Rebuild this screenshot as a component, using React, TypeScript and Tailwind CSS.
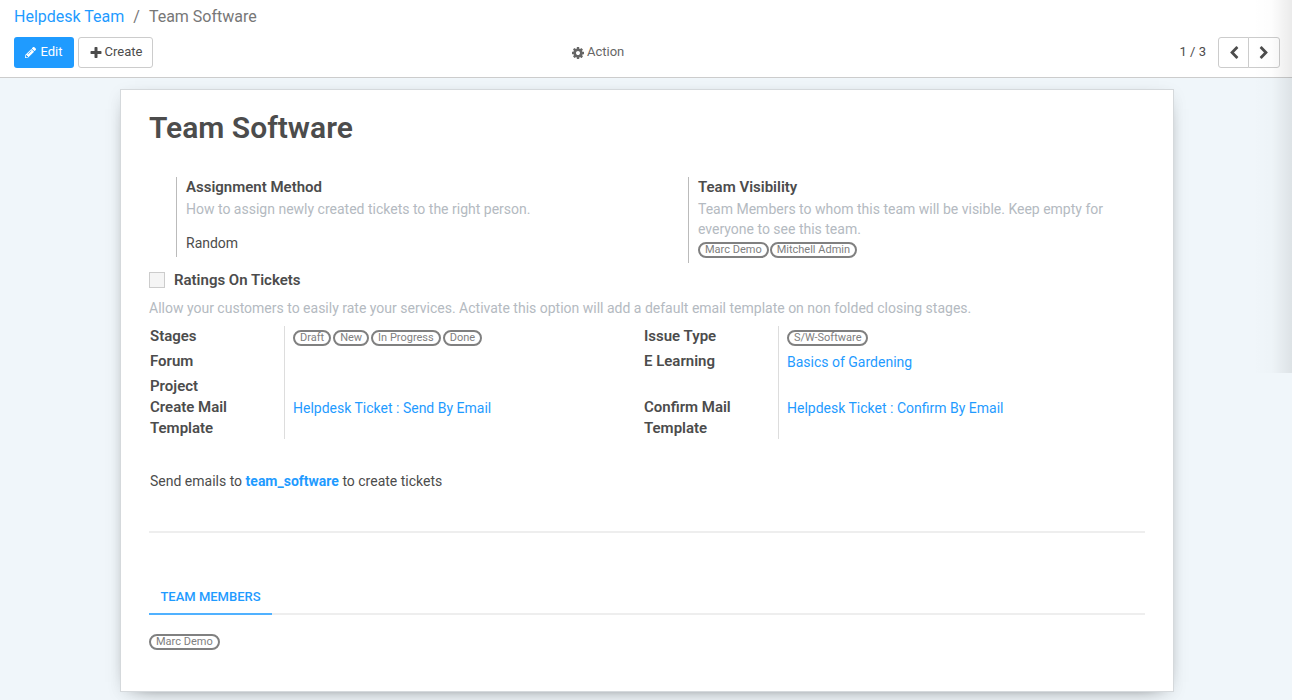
import type { ReactNode } from "react";
import { FaPencilAlt } from "react-icons/fa";

const ICON_PATHS = {
  plus: "M1600 736v192q0 40-28 68t-68 28h-416v416q0 40-28 68t-68 28h-192q-40 0-68-28t-28-68v-416h-416q-40 0-68-28t-28-68v-192q0-40 28-68t68-28h416v-416q0-40 28-68t68-28h192q40 0 68 28t28 68v416h416q40 0 68 28t28 68z",
  cog: "M1152 896q0-106-75-181t-181-75-181 75-75 181 75 181 181 75 181-75 75-181zm512-109v222q0 12-8 23t-20 13l-185 28q-19 54-39 91 35 50 107 138 10 12 10 25t-9 23q-27 37-99 108t-94 71q-12 0-26-9l-138-108q-44 23-91 38-16 136-29 186-7 28-36 28h-222q-14 0-24.5-8.5t-11.5-21.5l-28-184q-49-16-90-37l-141 107q-10 9-25 9-14 0-25-11-126-114-165-168-7-10-7-23 0-12 8-23 15-21 51-66.5t54-70.5q-27-50-41-99l-183-27q-13-2-21-12.5t-8-23.5v-222q0-12 8-23t19-13l186-28q14-46 39-92-40-57-107-138-10-12-10-24 0-10 9-23 26-36 98.5-107.5t94.5-71.5q13 0 26 10l138 107q44-23 91-38 16-136 29-186 7-28 36-28h222q14 0 24.5 8.5t11.5 21.5l28 184q49 16 90 37l142-107q9-9 24-9 13 0 25 10 129 119 165 170 7 8 7 22 0 12-8 23-15 21-51 66.5t-54 70.5q26 50 41 98l183 28q13 2 21 12.5t8 23.5z",
  left: "M1427 301l-531 531 531 531q19 19 19 45t-19 45l-166 166q-19 19-45 19t-45-19l-742-742q-19-19-19-45t19-45l742-742q19-19 45-19t45 19l166 166q19 19 19 45t-19 45z",
  right:
    "M1363 877l-742 742q-19 19-45 19t-45-19l-166-166q-19-19-19-45t19-45l531-531-531-531q-19-19-19-45t19-45l166-166q19-19 45-19t45 19l742 742q19 19 19 45t-19 45z",
};

function Icon({ name }: { name: keyof typeof ICON_PATHS }) {
  return (
    <svg viewBox="0 0 1792 1792" className="h-3.5 w-3.5 shrink-0 fill-current" aria-hidden="true">
      <path d={ICON_PATHS[name]} />
    </svg>
  );
}

function Tag({ children }: { children: ReactNode }) {
  return (
    <span className="inline-flex h-4 items-center whitespace-nowrap rounded-full border-2 border-[#808080] px-[5px] text-[11px] leading-3 text-[#808080]">
      {children}
    </span>
  );
}

function RecordLink({ children }: { children: ReactNode }) {
  return (
    <a href="#record" className="text-[#1f9bff]">
      {children}
    </a>
  );
}

type Field = { label: string; value?: ReactNode; height: string };

function FieldGroup({ fields }: { fields: Field[] }) {
  return (
    <dl className="w-[494px] pt-px">
      {fields.map((field, index) => (
        <div key={index} className={"flex " + field.height}>
          <dt className="w-[136px] shrink-0 border-r border-[#dddddd] pl-px pr-8 text-[15px] font-semibold leading-[21px]">
            {field.label}
          </dt>
          <dd className="flex items-start pl-2 text-sm leading-[22px]">{field.value}</dd>
        </div>
      ))}
    </dl>
  );
}

export default function App() {
  return (
    <div className="relative min-h-screen overflow-x-hidden bg-[#f0f6fa] font-['Roboto','Liberation_Sans',sans-serif] text-sm text-[#4c4c4c]">
      <header className="border-b border-[#cccccc] bg-white pb-[9px] pl-3.5 pr-3 pt-[5px]">
        <nav aria-label="Breadcrumb" className="flex h-6 items-center gap-[9px] text-base text-[#777777]">
          <a href="#teams" className="text-[#1f9bff]">
            Helpdesk Team
          </a>
          <span>/</span>
          <span>Team Software</span>
        </nav>
        <div className="mt-2 grid grid-cols-[1fr_auto_1fr] items-center">
          <div className="flex gap-1">
            <button className="flex h-[31px] w-[60px] items-center justify-center gap-1 rounded-[3px] bg-[#1f9bff] text-[13px] text-white">
              <FaPencilAlt size={11} />
              Edit
            </button>
            <button className="flex h-[31px] w-[75px] items-center justify-center gap-0.5 rounded-[3px] border border-[#cccccc] bg-white text-[13px]">
              <Icon name="plus" />
              Create
            </button>
          </div>
          <button className="-ml-[76px] flex items-center gap-0.5 text-[13px] text-[#666666]">
            <Icon name="cog" />
            Action
          </button>
          <div className="flex items-center justify-end">
            <span className="mr-3 text-[13px]">1 / 3</span>
            <button
              aria-label="Previous"
              className="flex h-[31px] w-[31px] items-center justify-center rounded-l-[3px] border border-[#cccccc] bg-white"
            >
              <Icon name="left" />
            </button>
            <button
              aria-label="Next"
              className="-ml-px flex h-[31px] w-8 items-center justify-center rounded-r-[3px] border border-[#cccccc] bg-white"
            >
              <Icon name="right" />
            </button>
          </div>
        </div>
      </header>

      <main className="pb-2 pl-[120px] pr-[118px] pt-[11px]">
        <section className="border border-[#d5d9dc] bg-white px-7 pb-[41px] pt-[18px] shadow-[0_5px_20px_-15px_#000000,0_4px_16px_rgba(0,0,0,0.06)]">
          <h1 className="text-[30px] font-semibold leading-10">Team Software</h1>

          <div className="mt-[29px] flex items-start pl-[27px]">
            <div className="w-[512px] shrink-0">
              <div className="h-20 border-l border-[#bbbbbb] pl-[9px]">
                <h2 className="text-[15px] font-semibold leading-5">Assignment Method</h2>
                <p className="mt-0.5 leading-5 text-[#b4bac1]">How to assign newly created tickets to the right person.</p>
                <p className="mt-3.5 leading-5">Random</p>
              </div>
            </div>
            <div className="h-[86px] w-[430px] border-l border-[#bbbbbb] pl-[9px]">
              <h2 className="text-[15px] font-semibold leading-5">Team Visibility</h2>
              <p className="mt-0.5 leading-5 text-[#b4bac1]">
                Team Members to whom this team will be visible. Keep empty for everyone to see this team.
              </p>
              <div className="mt-[3px] flex gap-px">
                <Tag>Marc Demo</Tag>
                <Tag>Mitchell Admin</Tag>
              </div>
            </div>
          </div>

          <div className="mt-[7px] flex h-5 items-center">
            <input
              id="ratings"
              type="checkbox"
              className="h-4 w-4 appearance-none border border-[#cccccc] bg-[#f5f5f5]"
            />
            <label htmlFor="ratings" className="pl-[9px] text-[15px] font-semibold leading-5">
              Ratings On Tickets
            </label>
          </div>
          <p className="mt-2 leading-5 text-[#b4bac1]">
            Allow your customers to easily rate your services. Activate this option will add a default email template on non
            folded closing stages.
          </p>

          <div className="mt-[7px] flex">
            <FieldGroup
              fields={[
                {
                  label: "Stages",
                  height: "h-[25px]",
                  value: (
                    <span className="flex gap-0.5 pt-1">
                      <Tag>Draft</Tag>
                      <Tag>New</Tag>
                      <Tag>In Progress</Tag>
                      <Tag>Done</Tag>
                    </span>
                  ),
                },
                { label: "Forum", height: "h-[25px]" },
                { label: "Project", height: "h-[21px]" },
                {
                  label: "Create Mail Template",
                  height: "h-[42px]",
                  value: <RecordLink>Helpdesk Ticket : Send By Email</RecordLink>,
                },
              ]}
            />
            <FieldGroup
              fields={[
                {
                  label: "Issue Type",
                  height: "h-[25px]",
                  value: (
                    <span className="flex pt-1">
                      <Tag>S/W-Software</Tag>
                    </span>
                  ),
                },
                { label: "E Learning", height: "h-[25px]", value: <RecordLink>Basics of Gardening</RecordLink> },
                { label: "", height: "h-[21px]" },
                {
                  label: "Confirm Mail Template",
                  height: "h-[42px]",
                  value: <RecordLink>Helpdesk Ticket : Confirm By Email</RecordLink>,
                },
              ]}
            />
          </div>

          <p className="mt-8 pl-px leading-5">
            Send emails to{" "}
            <a href="#alias" className="font-bold text-[#1f9bff]">
              team_software
            </a>{" "}
            to create tickets
          </p>

          <hr className="mt-10 border-t-2 border-[#eeeeee]" />

          <div role="tablist" className="mt-[49px] flex border-b-2 border-[#eeeeee]">
            <button
              role="tab"
              aria-selected="true"
              className="-mb-0.5 h-[33px] w-[123px] border-b-2 border-[#50b1ff] text-[13px] font-medium text-[#1f9bff]"
            >
              TEAM MEMBERS
            </button>
          </div>
          <div role="tabpanel" className="mt-[19px] flex">
            <Tag>Marc Demo</Tag>
          </div>
        </section>
      </main>

      <div className="pointer-events-none absolute right-0 top-0 h-[373px] w-10 bg-linear-to-r from-transparent via-black/1 to-black/8" />
    </div>
  );
}
